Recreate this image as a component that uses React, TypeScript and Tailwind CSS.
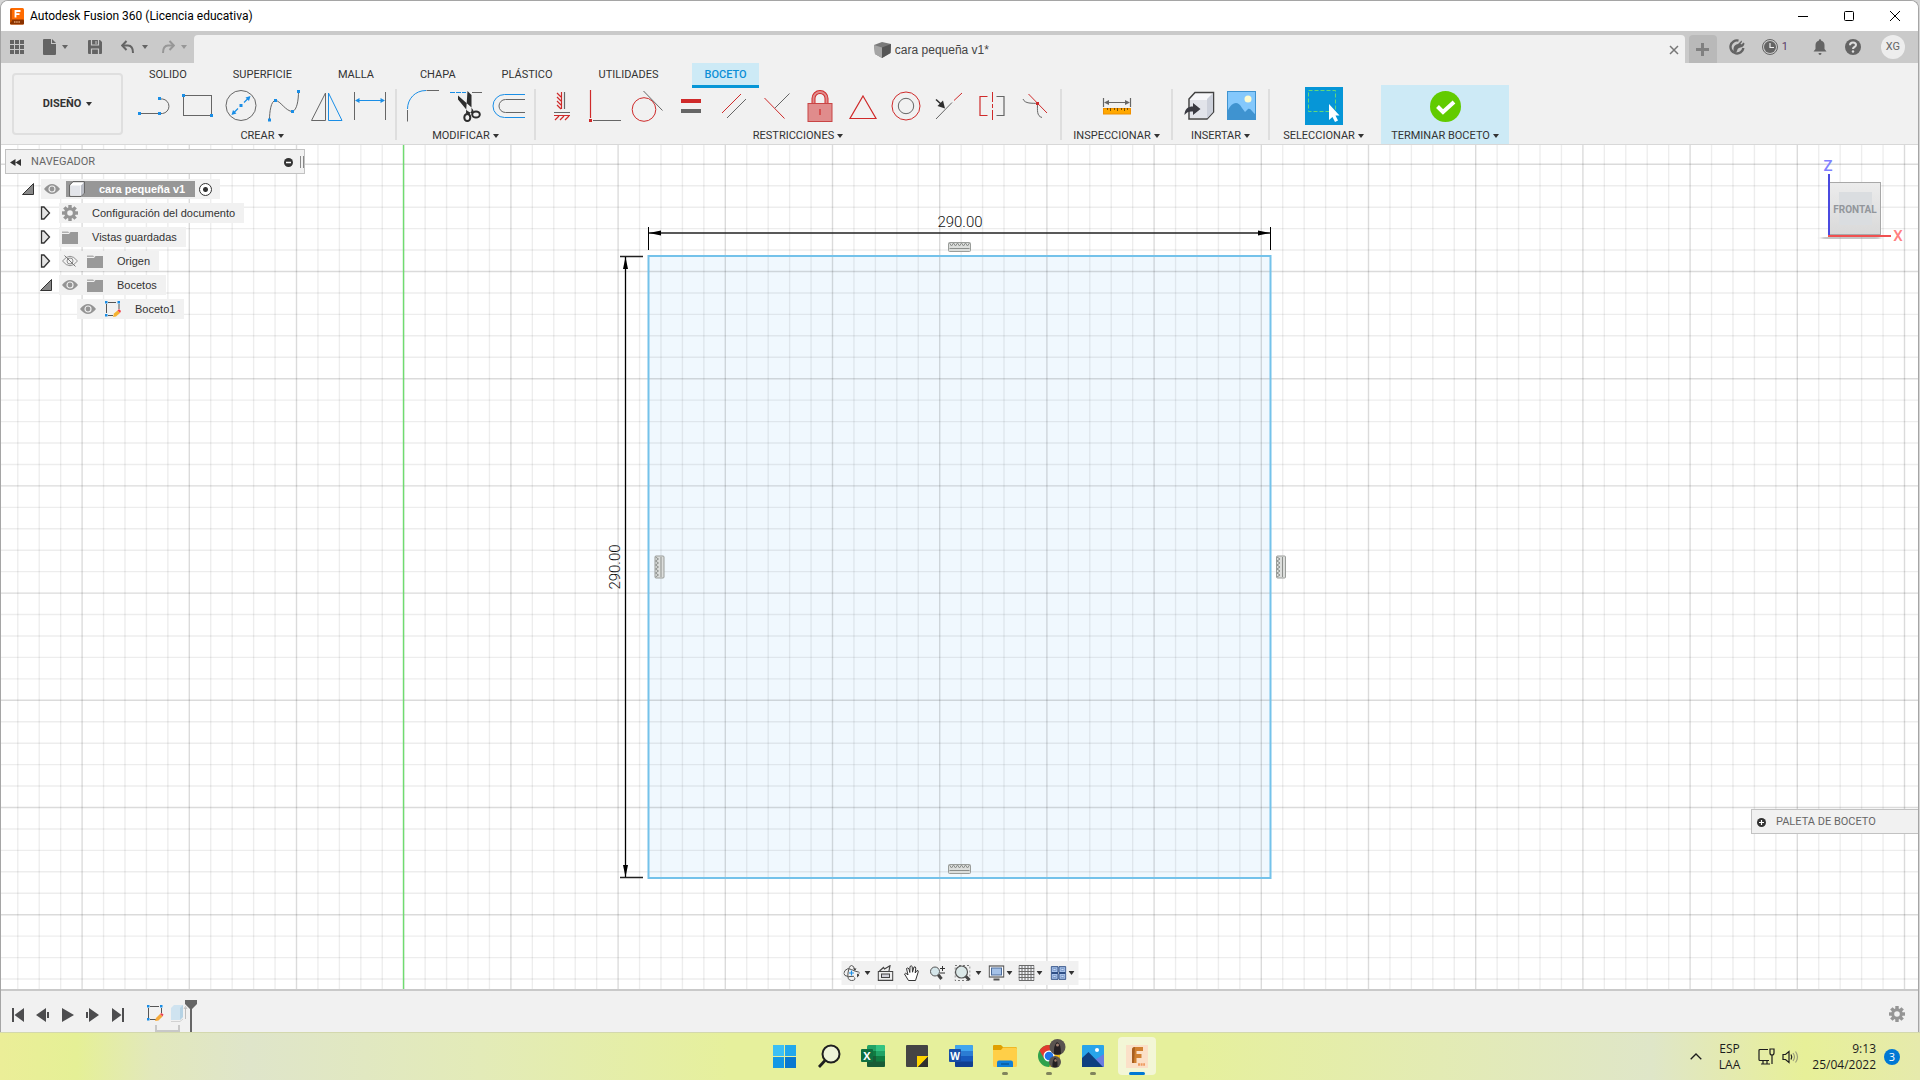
import type { ReactNode } from 'react'

const BLUE = '#1a8ee6'
const RED = '#cf2a2a'
const GREY = '#666666'

function Caret({ className = 'text-[#333]' }: { className?: string }) {
  return (
    <svg width="6" height="4" viewBox="0 0 6 4" className={className}>
      <path d="M0 0H6L3 4Z" fill="currentColor" />
    </svg>
  )
}

function ToolSvg({ children }: { children: ReactNode }) {
  return (
    <svg width="36" height="36" viewBox="0 0 36 36" fill="none" strokeWidth="1">
      {children}
    </svg>
  )
}

function Dot({ x, y, color = BLUE }: { x: number; y: number; color?: string }) {
  return <rect x={x - 1.5} y={y - 1.5} width="3" height="3" fill={color} />
}

interface Tool {
  name: string
  icon: ReactNode
}

const createTools: Tool[] = [
  {
    name: 'Línea',
    icon: (
      <>
        <path d="M4 25.5H21M24 25.5H25.5A7.3 7.3 0 0 0 25.5 11H24" stroke={GREY} />
        <Dot x={2.5} y={25.5} />
        <Dot x={22.5} y={25.5} />
        <Dot x={22.5} y={10.5} />
      </>
    ),
  },
  {
    name: 'Rectángulo',
    icon: (
      <>
        <rect x="3.5" y="7.5" width="28" height="20" stroke={GREY} />
        <Dot x={3.5} y={7.5} />
        <Dot x={31.5} y={27.5} />
      </>
    ),
  },
  {
    name: 'Círculo',
    icon: (
      <>
        <circle cx="18" cy="17.5" r="15" stroke={GREY} />
        <path d="M10 25.5L15 20.5M21 14.5L26 9.5" stroke={BLUE} strokeWidth="1.2" />
        <path d="M8.5 27L10 22L13.5 25.5ZM27.5 8L26 13L22.5 9.5Z" fill={BLUE} />
        <Dot x={18} y={17.5} />
      </>
    ),
  },
  {
    name: 'Spline',
    icon: (
      <>
        <path d="M3.5 32C3.5 24 5 12.5 9.5 12.5S20 23.5 26.5 23.5C31 22 32.5 12 32.5 3.5" stroke={GREY} />
        <Dot x={3.5} y={32} />
        <Dot x={9.5} y={12.5} />
        <Dot x={26.5} y={23.5} />
        <Dot x={32.5} y={3.5} />
      </>
    ),
  },
  {
    name: 'Simetría',
    icon: (
      <>
        <path d="M16.5 5V32.5H2.5Z" stroke={GREY} />
        <path d="M19.5 5V32.5H33Z" stroke={BLUE} />
      </>
    ),
  },
  {
    name: 'Cota de boceto',
    icon: (
      <>
        <path d="M2.5 4V32M33.5 4V32" stroke={GREY} />
        <path d="M5 12.5H31" stroke={BLUE} />
        <path d="M3 12.5L7.5 10V15ZM33 12.5L28.5 10V15Z" fill={BLUE} />
      </>
    ),
  },
]

const modifyTools: Tool[] = [
  {
    name: 'Empalme',
    icon: (
      <>
        <path d="M2.5 21C2.5 11 10 2.5 21 2.5" stroke={BLUE} />
        <path d="M21.5 2.5H34M2.5 22V33.5" stroke={GREY} />
      </>
    ),
  },
  {
    name: 'Recortar',
    icon: (
      <>
        <path d="M2 4.5H18" stroke={BLUE} strokeDasharray="5 1" />
        <path d="M24 4.5H34" stroke={GREY} />
        <path d="M10 7.5V11.5L19.5 23L24 25.5L25.5 22.5L23 19ZM19.5 3L23.5 7V23L21 27L18 25Z" fill="#2d2d2d" />
        <ellipse cx="19.3" cy="29.5" rx="3" ry="3.6" stroke="#2d2d2d" strokeWidth="2" />
        <ellipse cx="28" cy="26.5" rx="3.8" ry="3" stroke="#2d2d2d" strokeWidth="2" />
      </>
    ),
  },
  {
    name: 'Desfase',
    icon: (
      <>
        <path d="M34 6.5H13.5A11.5 11.5 0 0 0 13.5 29.5H34" stroke={BLUE} />
        <path d="M34 11.5H14.5A6.5 6.5 0 0 0 14.5 24.5H34" stroke={GREY} />
      </>
    ),
  },
]

const constraintTools: Tool[] = [
  {
    name: 'Horizontal/Vertical',
    icon: (
      <>
        <path d="M17.5 4V21M10 27.5H26M13 5L17 9M13 9L17 13M13 13L17 17M13 17L17 21M15 28L11 32M20 28L16 32M25 28L21 32" stroke={RED} strokeWidth="1.2" />
        <path d="M20.5 4V21M10 24.5H26" stroke={GREY} strokeWidth="1.2" />
      </>
    ),
  },
  {
    name: 'Coincidente',
    icon: (
      <>
        <path d="M3.5 2V30" stroke={RED} strokeWidth="1.2" />
        <path d="M6 32.5H34" stroke={GREY} />
        <Dot x={3.5} y={32.5} color={RED} />
      </>
    ),
  },
  {
    name: 'Tangente',
    icon: (
      <>
        <circle cx="14" cy="21.5" r="11.8" stroke={RED} />
        <path d="M13.5 3L32.5 22.5" stroke={GREY} />
      </>
    ),
  },
  {
    name: 'Igual',
    icon: (
      <>
        <rect x="8" y="11" width="20" height="4" fill={RED} />
        <rect x="8" y="21" width="20" height="4" fill={GREY} />
      </>
    ),
  },
  {
    name: 'Paralela',
    icon: (
      <>
        <path d="M6 25L25 6" stroke={RED} />
        <path d="M11 30L30 11" stroke={GREY} />
      </>
    ),
  },
  {
    name: 'Perpendicular',
    icon: (
      <>
        <path d="M5.5 10L25.5 30.5" stroke={RED} />
        <path d="M16 20L30.5 5.5" stroke={GREY} />
      </>
    ),
  },
  {
    name: 'Fijar',
    icon: (
      <>
        <path d="M11.5 15V10.5A6.5 6.5 0 0 1 24.5 10.5V15" stroke={RED} strokeWidth="4" />
        <path d="M11.5 15V10.5A6.5 6.5 0 0 1 24.5 10.5V15" stroke="#e08c8c" strokeWidth="2" />
        <rect x="6" y="15.5" width="24" height="18" fill="#e08c8c" stroke="#c84444" />
        <path d="M18 21V27" stroke={RED} strokeWidth="1.2" />
      </>
    ),
  },
  { name: 'Punto medio', icon: <path d="M18 8L31 30.5H5Z" stroke={RED} strokeWidth="1.2" /> },
  {
    name: 'Concéntrica',
    icon: (
      <>
        <circle cx="18" cy="18" r="14" stroke={RED} />
        <circle cx="18" cy="18" r="7.7" stroke={GREY} />
      </>
    ),
  },
  {
    name: 'Colineal',
    icon: (
      <>
        <path d="M5 31L21 14.5" stroke={GREY} />
        <path d="M23 12.5L31 5" stroke={RED} />
        <path d="M5 11.5L10 16" stroke="#2d2d2d" strokeWidth="1.5" />
        <path d="M14 20.5L6.5 18L12 12.5Z" fill="#2d2d2d" />
      </>
    ),
  },
  {
    name: 'Simétrica',
    icon: (
      <>
        <path d="M13.5 8.5H6V27.5H13.5" stroke={RED} strokeWidth="1.2" />
        <path d="M18.5 4V14M18.5 16V20M18.5 22V32" stroke={RED} />
        <path d="M22.5 8.5H30V27.5H22.5" stroke={GREY} strokeWidth="1.2" />
      </>
    ),
  },
  {
    name: 'Curvatura',
    icon: (
      <>
        <path d="M6 11C8 16 15 15 20.5 15.5C20.5 22 19.5 28 25 29.5" stroke={GREY} />
        <path d="M11.5 6L30 25" stroke={RED} />
        <Dot x={20.5} y={15.5} color={RED} />
      </>
    ),
  },
]

const inspectTools: Tool[] = [
  {
    name: 'Medir',
    icon: (
      <>
        <path d="M4.5 10V19M31.5 10V19M7 14.5H29" stroke={GREY} strokeWidth="1.2" />
        <path d="M5 14.5L10 12V17ZM31 14.5L26 12V17Z" fill={GREY} />
        <rect x="4.5" y="20.5" width="27" height="5.5" fill="#ffa800" stroke="#f09000" />
        <path d="M8.5 20V22M11.5 20V23M15.5 20V22M18.5 20V23M22.5 20V22M25.5 20V23M28.5 20V22" stroke="#7a5000" />
      </>
    ),
  },
]

const insertTools: Tool[] = [
  {
    name: 'Insertar derivado',
    icon: (
      <>
        <path d="M8 11L14 4.5H32.5V24L26 31H8Z" fill="#f8f8fa" stroke="#444" strokeWidth="1.5" />
        <path d="M26 11L32 5V24L26 30.5Z" fill="#cdd1db" />
        <path d="M9 12H26V30H9Z" fill="#e2e4ea" />
        <path d="M3.5 27C3.5 21 7 18.5 12 18.5V15L19.5 21L12 27V23.5C8 23 6 24 3.5 27Z" fill="#3a3a42" />
      </>
    ),
  },
  {
    name: 'Lienzo',
    icon: (
      <>
        <rect x="3.5" y="3.5" width="28" height="28" fill="#84c8fc" stroke="#3f93d0" />
        <circle cx="24" cy="11" r="3.5" fill="#fdfbd0" />
        <path d="M4 22C8 14 14 12 18 20L21 24L24 21C27 20 28 24 31 26V31H4Z" fill="#3f93d0" />
      </>
    ),
  },
]

function GroupLabel({ label }: { label: string }) {
  return (
    <button className="flex h-[17px] items-center justify-center gap-[3px] pt-px whitespace-nowrap">
      {label}
      <Caret />
    </button>
  )
}

function ToolGroup({ label, tools, width }: { label: string; tools: Tool[]; width?: string }) {
  return (
    <div className="flex">
      <div className={`flex flex-col px-1 ${width ?? ''}`}>
        <div className="flex h-[42px] items-center justify-center">
          {tools.map((tool) => (
            <button key={tool.name} title={tool.name} aria-label={tool.name} className="flex w-[43px] shrink-0 justify-center">
              <ToolSvg>{tool.icon}</ToolSvg>
            </button>
          ))}
        </div>
        <GroupLabel label={label} />
      </div>
      <div className="my-1 w-[2px] bg-[#dedede]" />
    </div>
  )
}

function FusionLogo() {
  return (
    <svg width="14" height="17" viewBox="0 0 14 17">
      <rect width="14" height="16.5" rx="1.5" fill="#ff6b00" />
      <rect y="11.5" width="14" height="5" rx="1" fill="#8a3300" />
      <path d="M0 1.5V15L2 13V1Z" fill="#c95200" />
      <path d="M5.5 9.5V3H10.5M5.5 6.2H9.5" stroke="#fff" strokeWidth="1.8" fill="none" />
      <path d="M4 14H10" stroke="#e0a070" strokeWidth="1.5" strokeDasharray="1.5 .7" />
    </svg>
  )
}

function TitleBar() {
  return (
    <header className="flex h-[30px] items-center bg-white pl-[9px]">
      <FusionLogo />
      <h1 className="flex-1 pl-[6px] font-['Roboto',sans-serif] text-[12px] text-black">Autodesk Fusion 360 (Licencia educativa)</h1>
      <button aria-label="Minimizar" className="flex h-full w-[46px] items-center justify-center">
        <svg width="10" height="10"><path d="M0 5.5H10" stroke="#000" /></svg>
      </button>
      <button aria-label="Maximizar" className="flex h-full w-[46px] items-center justify-center">
        <svg width="10" height="10"><rect x=".5" y=".5" width="9" height="9" rx="1" fill="none" stroke="#000" /></svg>
      </button>
      <button aria-label="Cerrar" className="flex h-full w-[46px] items-center justify-center">
        <svg width="10" height="10"><path d="M0 0L10 10M10 0L0 10" stroke="#000" /></svg>
      </button>
    </header>
  )
}

function UndoArrow() {
  return (
    <svg width="14" height="14" viewBox="0 0 14 14" fill="none" stroke="currentColor" strokeWidth="2">
      <path d="M1.5 5.5H7C11 5.5 12 9 12 13" />
      <path d="M5.5 1L1.2 5.5L5.5 10" />
    </svg>
  )
}

function TabBar() {
  return (
    <div className="flex h-8 items-end bg-[#cacaca] text-[#646464]">
      <div className="flex h-full w-[193px] items-center pl-[9px]">
        <button aria-label="Panel de datos">
          <svg width="14" height="14" fill="currentColor">
            {[0, 5, 10].map((y) => [0, 5, 10].map((x) => <rect key={`${x}-${y}`} x={x} y={y} width="4" height="4" />))}
          </svg>
        </button>
        <button aria-label="Archivo" className="ml-[19px] flex items-center gap-[6px]">
          <svg width="13" height="16" fill="currentColor"><path d="M1 0H8V5H13V15Q13 16 12 16H1Q0 16 0 15V1Q0 0 1 0ZM9 0L13 4H9Z" /></svg>
          <Caret className="text-[#646464]" />
        </button>
        <button aria-label="Guardar" className="ml-5">
          <svg width="14" height="14" viewBox="0 0 14 14">
            <path d="M1 0H12L14 2V13Q14 14 13 14H1Q0 14 0 13V1Q0 0 1 0Z" fill="currentColor" />
            <path d="M3.5 0V5H10.5V0M3.5 14V9H10.5V14" fill="none" stroke="#cacaca" strokeWidth="1.2" />
            <path d="M8 1V4" stroke="#cacaca" />
          </svg>
        </button>
        <button aria-label="Deshacer" className="ml-[19px] flex items-center gap-[7px]">
          <UndoArrow />
          <Caret className="text-[#646464]" />
        </button>
        <button aria-label="Rehacer" className="ml-[13px] flex items-center gap-[6px] text-[#979797]">
          <span className="-scale-x-100"><UndoArrow /></span>
          <Caret className="text-[#979797]" />
        </button>
      </div>

      <div className="flex h-7 flex-1 items-center rounded-t-[4px] bg-[#f1f1f1] pt-px pr-[6px]">
        <div className="flex flex-1 items-center justify-center gap-1 font-['Liberation_Sans',sans-serif] text-[12px] text-[#444]">
          <svg width="17" height="16" viewBox="0 0 17 16">
            <path d="M0 3L8 0L17 2L16.5 11L8 16L1 12Z" fill="#7a7a7a" />
            <path d="M0 3L8 5.5V16L1 12Z" fill="#a5a5a5" />
            <path d="M8 5.5L17 2L16.5 11L8 16Z" fill="#555" />
          </svg>
          <span>cara pequeña v1*</span>
        </div>
        <button aria-label="Cerrar documento">
          <svg width="10" height="10"><path d="M1 1L9 9M9 1L1 9" stroke="#777" strokeWidth="1.5" /></svg>
        </button>
      </div>

      <div className="flex h-full items-end pl-1">
        <button aria-label="Nuevo diseño" className="flex h-7 w-7 items-center justify-center rounded-t-[4px] bg-[#b9b9b9]">
          <svg width="13" height="13"><path d="M6.5 0V13M0 6.500H13" stroke="#808080" strokeWidth="3" /></svg>
        </button>
        <div className="flex h-full items-center pl-3">
          <button aria-label="Extensiones">
            <svg width="16" height="16" viewBox="0 0 16 16">
              <path d="M9.5 1.600A6.500 6.500 0 1 0 14.400 9" fill="none" stroke="currentColor" strokeWidth="2.400" />
              <path d="M4.500 14V9.500Q5 5.500 9 5L12.500 1.500L13 3L11.500 4.500L12.500 5.500L14.500 3.500L15.500 4.500Q15 8 11.500 8.500Q8 9 8 12.500Z" fill="currentColor" />
            </svg>
          </button>
          <button aria-label="Estado de trabajos" className="ml-[17px] flex items-center gap-1 text-[11px]">
            <svg width="16" height="16" viewBox="0 0 16 16">
              <circle cx="8" cy="8" r="7.5" fill="none" stroke="currentColor" />
              <circle cx="8" cy="8" r="6" fill="currentColor" />
              <path d="M8 4V8.5H12" fill="none" stroke="#eee" strokeWidth="1.2" />
            </svg>
            <span className="font-['Roboto',sans-serif] text-[#5b3a68]">1</span>
          </button>
          <button aria-label="Notificaciones" className="ml-[25px]">
            <svg width="14" height="16" viewBox="0 0 14 16" fill="currentColor">
              <path d="M7 0Q8 0 8 1.5Q11.5 2.5 11.5 6V10L13.5 12.5H.5L2.5 10V6Q2.5 2.5 6 1.5Q6 0 7 0ZM5.5 14H8.5Q8.5 16 7 16T5.5 14Z" />
            </svg>
          </button>
          <button aria-label="Ayuda" className="ml-[18px]">
            <svg width="16" height="16" viewBox="0 0 16 16">
              <circle cx="8" cy="8" r="8" fill="currentColor" />
              <path d="M5 6.2Q5 3.5 8 3.5T11 6Q11 7.2 9.5 8Q8 8.8 8 10" fill="none" stroke="#ddd" strokeWidth="2" />
              <circle cx="8" cy="12.5" r="1.2" fill="#ddd" />
            </svg>
          </button>
          <button className="mr-[13px] ml-5 h-6 w-6 rounded-full bg-[#ededed] font-['Roboto',sans-serif] text-[11px] text-[#666]">XG</button>
        </div>
      </div>
    </div>
  )
}

const ribbonTabs = ['SOLIDO', 'SUPERFICIE', 'MALLA', 'CHAPA', 'PLÁSTICO', 'UTILIDADES', 'BOCETO']

function Ribbon() {
  return (
    <div className="flex border-b border-[#d8d8d8] bg-[#f1f1f1] pl-[11px] font-['Roboto',sans-serif] text-[11px] text-[#333]">
      <button className="mt-[10px] flex h-[62px] w-[111px] items-center justify-center gap-[5px] rounded-[4px] border-2 border-[#dfdfdf] font-bold">
        DISEÑO
        <Caret />
      </button>
      <div className="flex-1 pl-[6px]">
        {/* the active tab hangs slightly over the tool row */}
        <nav className="flex h-[22px] gap-[22px] pl-2">
          {ribbonTabs.map((tab) => (
            <button
              key={tab}
              className={`h-[25px] border-b-[3px] px-3 pt-[2px] ${
                tab === 'BOCETO' ? 'border-[#0696d7] bg-[#cdeaf6] font-medium text-[#0c8fd6]' : 'border-transparent'
              }`}
            >
              {tab}
            </button>
          ))}
        </nav>
        <div className="flex h-[59px]">
          <ToolGroup label="CREAR" tools={createTools} />
          <ToolGroup label="MODIFICAR" tools={modifyTools} />
          <ToolGroup label="RESTRICCIONES" tools={constraintTools} />
          <ToolGroup label="INSPECCIONAR" tools={inspectTools} width="w-[109px]" />
          <ToolGroup label="INSERTAR" tools={insertTools} width="w-[95px]" />
          <div className="flex w-[107px] flex-col">
            <button aria-label="Seleccionar" className="flex h-[42px] items-center justify-center">
              <svg width="38" height="38" viewBox="0 0 38 38">
                <rect width="38" height="38" fill="#0696d7" />
                <rect x="3.5" y="3.5" width="27" height="21" fill="none" stroke="#62d87a" strokeDasharray="4 2" />
                <path d="M24 17V33L27.5 30L30 35L33 33.5L30.5 28.5H34.5Z" fill="#fff" />
              </svg>
            </button>
            <GroupLabel label="SELECCIONAR" />
          </div>
          <div className="ml-1 flex w-[128px] flex-col bg-[#cdeaf6]">
            <button aria-label="Terminar boceto" className="flex h-[42px] items-center justify-center">
              <svg width="31" height="31" viewBox="0 0 31 31">
                <circle cx="15.5" cy="15.5" r="15.5" fill="#62cb00" />
                <path d="M7.5 15.5L13 21L24 11" fill="none" stroke="#fff" strokeWidth="4" />
              </svg>
            </button>
            <GroupLabel label="TERMINAR BOCETO" />
          </div>
        </div>
      </div>
    </div>
  )
}

function EyeIcon({ off }: { off?: boolean }) {
  return (
    <svg width="16" height="12" viewBox="0 0 16 12" fill="none">
      {off ? (
        <>
          <path d="M.5 6Q8-3.5 15.5 6Q8 15.5 .5 6Z" stroke="#8f8f8f" />
          <circle cx="8" cy="6" r="3" stroke="#8f8f8f" />
          <path d="M2.5 .5L13.5 11.5" stroke="#777" />
        </>
      ) : (
        <>
          <path d="M0 6Q8-4 16 6Q8 16 0 6Z" fill="#949494" />
          <circle cx="8" cy="6" r="3" fill="#949494" stroke="#eee" strokeWidth="1.2" />
        </>
      )}
    </svg>
  )
}

function GearIcon() {
  return (
    <svg width="16" height="16" viewBox="0 0 16 16">
      <circle cx="8" cy="8" r="4.3" fill="none" stroke="#959595" strokeWidth="3" />
      {[0, 45, 90, 135, 180, 225, 270, 315].map((a) => (
        <rect key={a} x="6.3" y="0" width="3.4" height="3.5" fill="#959595" transform={`rotate(${a} 8 8)`} />
      ))}
    </svg>
  )
}

function FolderIcon() {
  return (
    <svg width="16" height="13" viewBox="0 0 16 13">
      <path d="M0 .5H6L7.5 2H0Z" fill="#b0b0b0" />
      <path d="M0 3H7L8.5 1H16V13H0Z" fill="#999" />
    </svg>
  )
}

function SketchIcon() {
  return (
    <svg width="16" height="16" viewBox="0 0 16 16">
      <path d="M3 1.5H11M1.5 3V12M14 3V8M3 14.5H8" stroke="#555" />
      <path d="M0 0H2.5V2.5H0ZM12.5 0H15V2.5H12.5ZM0 13H2.5V15.5H0Z" fill={BLUE} />
      <path d="M8 16L9 12.5L12.5 9.5L15 12L11 15.5Z" fill="#f5b230" />
      <path d="M12.5 9.5L14 8L16 10L15 12Z" fill="#f0404a" />
    </svg>
  )
}

function BodyIcon() {
  return (
    <svg width="16" height="16" viewBox="0 0 16 16">
      <path d="M.7 4L4 .7H15.3V12L12 15.3H.7Z" fill="#fff" stroke="#555" />
      <path d="M12 4.5L15 1.5V12L12 15Z" fill="#b9bcc4" />
      <path d="M1.5 4.5H11.5V14.5H1.5Z" fill="#e3e5ea" />
    </svg>
  )
}

interface TreeNode {
  label: string
  indent: string
  state: 'open' | 'closed' | 'leaf'
  icons: ReactNode[]
}

const treeNodes: TreeNode[] = [
  { label: 'Configuración del documento', indent: 'pl-[38px]', state: 'closed', icons: [<GearIcon />] },
  { label: 'Vistas guardadas', indent: 'pl-[38px]', state: 'closed', icons: [<FolderIcon />] },
  { label: 'Origen', indent: 'pl-[38px]', state: 'closed', icons: [<EyeIcon off />, <FolderIcon />] },
  { label: 'Bocetos', indent: 'pl-[38px]', state: 'open', icons: [<EyeIcon />, <FolderIcon />] },
  { label: 'Boceto1', indent: 'pl-[56px]', state: 'leaf', icons: [<EyeIcon />, <SketchIcon />] },
]

function Expander({ state }: { state: TreeNode['state'] }) {
  return (
    <span className="flex w-5 shrink-0 items-center pl-px">
      {state === 'open' && (
        <svg width="12" height="12"><path d="M11.5 .5V11.5H.5Z" fill="#888" stroke="#333" /></svg>
      )}
      {state === 'closed' && (
        <svg width="11" height="14" viewBox="0 0 11 14"><path d="M1.500 1H4L9.500 7L4 13H1.500Z" fill="#e4e4e4" stroke="#333" strokeWidth="1.3" /></svg>
      )}
    </span>
  )
}

function Browser() {
  return (
    <section className="relative pt-1 pl-1">
      <div className="flex h-[25px] w-[300px] items-center border border-[#c2c2c2] bg-[#f1f1f1] pt-px pl-[4px] font-['Roboto',sans-serif] text-[11px] text-[#666]">
        <button aria-label="Contraer navegador">
          <svg width="11" height="7"><path d="M5.5 0V7L0 3.5ZM11 0V7L5.5 3.5Z" fill="#333" /></svg>
        </button>
        <h2 className="flex-1 pl-[10px]">NAVEGADOR</h2>
        <button aria-label="Minimizar navegador">
          <svg width="9" height="9"><circle cx="4.5" cy="4.5" r="4.5" fill="#333" /><path d="M2 4.5H7" stroke="#fff" strokeWidth="1.5" /></svg>
        </button>
        <svg width="4" height="12" className="ml-[7px]"><path d="M.5 0V12M3.5 0V12" stroke="#888" /></svg>
      </div>

      <ul className="-ml-1 flex flex-col gap-1 pt-[5px] font-['Liberation_Sans',sans-serif] text-[11px] text-[#333]">
        <li className="flex h-5 pl-5">
          <Expander state="open" />
          <div className="flex items-center bg-[#f1f1f1] pr-2 pl-[3px]">
            <EyeIcon />
            <div className="mr-1 ml-[6px] flex h-4 items-center gap-[14px] bg-[#979797] pr-[10px] pl-[3px] font-bold text-white">
              <BodyIcon />
              <span>cara pequeña v1</span>
            </div>
            <input type="radio" defaultChecked aria-label="Activar cara pequeña v1" className="h-[13px] w-[13px] appearance-none rounded-full border border-[#333] bg-white bg-[radial-gradient(#333_0_2px,transparent_3px)]" />
          </div>
        </li>
        {treeNodes.map((node) => (
          <li key={node.label} className={`flex h-5 ${node.indent}`}>
            <Expander state={node.state} />
            <div className="flex items-center bg-[#f1f1f1] pr-[9px] pl-[3px]">
              <span className="flex items-center gap-[9px] pr-[14px]">
                {node.icons.map((icon, i) => (
                  <span key={i}>{icon}</span>
                ))}
              </span>
              {node.label}
            </div>
          </li>
        ))}
      </ul>
    </section>
  )
}

// Grid origin (green axis) and pitch of one minor cell
const GRID_X = 402.7
const GRID_Y = 19.3
const CELL = 21.44
const columns = Array.from({ length: 180 }, (_, i) => i - 60)
const rows = Array.from({ length: 120 }, (_, i) => i - 20)

function ConstraintGlyph({ x, y, vertical }: { x: number; y: number; vertical?: boolean }) {
  return (
    <g transform={`translate(${x} ${y})${vertical ? ' rotate(-90)' : ''}`}>
      <rect x="-11" y="-4.5" width="22" height="9" rx="1" fill="#dcdedc" stroke="#9a9d9a" />
      <path d="M-10-4L-8-1L-6-4L-4-1L-2-4L0-1L2-4L4-1L6-4L8-1L10-4" fill="none" stroke="#8b8e8b" />
      <path d="M-10 1.5H10" stroke="#8b8e8b" />
    </g>
  )
}

function SketchCanvas() {
  return (
    <svg className="absolute inset-0 h-full w-full" fontFamily="Roboto, sans-serif">
      <rect x="647.5" y="111" width="622" height="622" fill="#f0f8fe" />
      {columns.map((c) => (
        <line key={c} x1={GRID_X + c * CELL} x2={GRID_X + c * CELL} y1="0" y2="100%" stroke="#000" strokeWidth="1.4" strokeOpacity={c % 5 === 0 ? 0.14 : 0.07} />
      ))}
      {rows.map((r) => (
        <line key={r} x1="0" x2="100%" y1={GRID_Y + r * CELL} y2={GRID_Y + r * CELL} stroke="#000" strokeWidth="1.4" strokeOpacity={r % 5 === 0 ? 0.14 : 0.07} />
      ))}
      <path d="M402.5 0V2000" stroke="#6fdc6f" strokeWidth="1.4" />
      <rect x="647.5" y="111" width="622" height="622" fill="none" stroke="#74c2ea" strokeWidth="2" />

      {/* horizontal dimension */}
      <path d="M647.5 82V105M1269.5 82V105" stroke="#000" />
      <path d="M648 88H1269" stroke="#222" strokeWidth="1.5" />
      <path d="M648 88L660 85.5V90.5ZM1269 88L1257 85.5V90.5Z" fill="#000" />
      <text x="959" y="82" textAnchor="middle" fontSize="15" fontWeight="300" fill="#111">290.00</text>

      {/* vertical dimension */}
      <path d="M619 111.5H642M619 732.5H642" stroke="#222" strokeWidth="1.4" />
      <path d="M624.5 112V732" stroke="#000" strokeWidth="1.3" />
      <path d="M624.5 112L622 124H627ZM624.5 732L622 720H627Z" fill="#000" />
      <text transform="translate(619 422) rotate(-90)" textAnchor="middle" fontSize="15" fontWeight="300" fill="#111">290.00</text>

      <ConstraintGlyph x={958.5} y={102} />
      <ConstraintGlyph x={958.5} y={724} />
      <ConstraintGlyph x={658.5} y={422} vertical />
      <ConstraintGlyph x={1280} y={422} vertical />
    </svg>
  )
}

function ViewCube() {
  return (
    <svg width="110" height="100" viewBox="0 0 110 100" className="absolute top-[10px] right-0" fontFamily="Roboto, sans-serif">
      <defs>
        <linearGradient id="face" x1="0" y1="0" x2="0" y2="1">
          <stop offset="0" stopColor="#ececec" />
          <stop offset="1" stopColor="#d9d9d9" />
        </linearGradient>
        <filter id="soft"><feGaussianBlur stdDeviation="2" /></filter>
      </defs>
      <path d="M14 83L72 83.1" stroke="#888" strokeWidth="3" filter="url(#soft)" />
      <rect x="21.5" y="27.5" width="51" height="52" fill="url(#face)" stroke="#a8a8a8" />
      <rect x="31" y="37" width="33" height="33" fill="#dadde0" />
      <text x="47" y="58" textAnchor="middle" fontSize="10" fontWeight="700" fill="#92969b">FRONTAL</text>
      <path d="M21 19V81" stroke="#4a4ae0" strokeWidth="2" />
      <path d="M20 81H83" stroke="#f05050" strokeWidth="2" />
      <text x="20" y="16" textAnchor="middle" fontSize="15" fontWeight="500" fill="#8080ff">Z</text>
      <text x="90" y="86" textAnchor="middle" fontSize="15" fontWeight="500" fill="#ff8080">X</text>
    </svg>
  )
}

const navTools = [
  {
    name: 'Órbita',
    menu: true,
    cell: 'w-[31px] gap-[5px]',
    icon: (
      <>
        <path d="M10.5 11.3Q4 12.300 1.500 10.500T1.500 5.500T8 4.500T15 7T13.500 10.700" stroke="#555" />
        <path d="M11.300 5Q10.500 .5 8 .5T4.500 8T8 15.500T11 12.500" stroke="#555" />
        <path d="M13.500 8.500V12.500L16 10.300ZM9.500 3.500H13L11.500 6Z" fill="#444" />
        <path d="M5.500 8H10.500M8 5.500V10.500" stroke={BLUE} strokeWidth="1.2" />
      </>
    ),
  },
  {
    name: 'Mirar a',
    cell: 'w-[26px]',
    icon: (
      <>
        <path d="M.7 6.5H15.300V15.300H.7ZM2 6L6 2.500L7 4L12.500 .7L11.500 6" stroke="#444" fill="#eee" strokeWidth="1.2" />
        <rect x="4" y="9" width="8" height="3.5" stroke="#444" fill="#d0d0d8" />
      </>
    ),
  },
  {
    name: 'Encuadre',
    cell: 'w-[26px]',
    icon: (
      <path d="M5 15.500L1 9Q1.500 7.500 3.500 9L4.500 10L3 3.500Q4.500 2 5.500 4L6.300 7.500L6.500 1.500Q8 .2 8.700 1.500L9 7.200L10.500 2Q12 1.300 12.300 3L11.700 8L13.500 5.500Q15.200 5.300 14.700 7L12 15.500Z" stroke="#333" fill="#fff" />
    ),
  },
  {
    name: 'Zoom',
    cell: 'w-[26px]',
    icon: (
      <>
        <path d="M8.5 9.5L12 14" stroke="#444" strokeWidth="3" />
        <circle cx="5.5" cy="6.5" r="4.5" stroke="#555" fill="#d5e6ea" />
        <path d="M13 1V6M10.5 3.5H15.5M10.5 8H15.5" stroke="#333" />
      </>
    ),
  },
  {
    name: 'Ajustar',
    menu: true,
    cell: 'w-[36px] gap-[5px]',
    icon: (
      <>
        <rect x=".5" y=".5" width="15" height="15" stroke="#777" strokeDasharray="2 2" />
        <path d="M10.5 10.5L15 15" stroke="#444" strokeWidth="3" />
        <circle cx="7" cy="7" r="6" stroke="#555" fill="#dbe8e8" strokeWidth="1.2" />
      </>
    ),
  },
  {
    name: 'Configuración de visualización',
    menu: true,
    cell: 'w-[29px] gap-[2px]',
    icon: (
      <>
        <rect x=".7" y="1" width="14.6" height="11" stroke="#555" fill="#fff" strokeWidth="1.2" />
        <rect x="3" y="3" width="10" height="7" fill="#a5c2e8" stroke="#4a6a9a" />
        <path d="M5 14.5H11" stroke="#555" strokeWidth="2" />
      </>
    ),
  },
  {
    name: 'Rejilla y captura',
    menu: true,
    cell: 'w-[31px] gap-[2px]',
    icon: <path d="M.5 .5H15.5V15.5H.5ZM3.5 0V16M6.5 0V16M9.5 0V16M12.5 0V16M0 3.5H16M0 6.5H16M0 9.5H16M0 12.5H16" stroke="#6a6a6a" fill="#f0f2f6" />,
  },
  {
    name: 'Ventanas gráficas',
    menu: true,
    cell: 'w-[32px] gap-[2px]',
    icon: (
      <>
        <path d="M.7 1.7H7.500V7.500H.7ZM8.500 1.700H15.300V7.500H8.500ZM.7 8.500H7.500V14.300H.7ZM8.500 8.500H15.300V14.300H8.500Z" stroke="#2f4f86" fill="#a9c3ea" />
        <path d="M2.500 3.500H5.500V5.500H2.500ZM10.500 3.500H13.500V5.500H10.500ZM2.500 10.500H5.500V12.500H2.500ZM10.500 10.500H13.500V12.500H10.500Z" stroke="#6d8cc0" strokeWidth=".7" fill="#c4d6f2" />
      </>
    ),
  },
]

function NavigationBar() {
  return (
    <div className="absolute bottom-1 left-1/2 flex h-6 -translate-x-1/2 bg-[#f1f1f1]">
      {navTools.map((tool) => (
        <button key={tool.name} aria-label={tool.name} title={tool.name} className={`flex shrink-0 items-center justify-center ${tool.cell}`}>
          <svg width="16" height="16" viewBox="0 0 16 16" fill="none" className="shrink-0">{tool.icon}</svg>
          {tool.menu && <Caret />}
        </button>
      ))}
    </div>
  )
}

const playback = [
  { name: 'Inicio', d: 'M1 0H3V14H1ZM13 0V14L3.5 7Z' },
  { name: 'Anterior', d: 'M10 0V14L0 7ZM11 4H13V10H11Z' },
  { name: 'Reproducir', d: 'M1 0L13 7L1 14Z' },
  { name: 'Siguiente', d: 'M0 4H2V10H0ZM3 0L13 7L3 14Z' },
  { name: 'Fin', d: 'M1 0L10.5 7L1 14ZM11 0H13V14H11Z' },
]

function Timeline() {
  return (
    <footer className="flex h-[43px] border-t-2 border-[#c9c9c9] bg-[#f1f1f1] pr-[13px] pl-[10px]">
      <div className="flex items-center gap-3 pt-[7px]">
        {playback.map((p) => (
          <button key={p.name} aria-label={p.name}>
            <svg width="13" height="14" fill="#4d4d4f"><path d={p.d} /></svg>
          </button>
        ))}
      </div>
      <div className="flex-1 pl-[22px]">
        <svg width="54" height="41" viewBox="0 0 54 41">
          <g transform="translate(1 14)">
            <path d="M3 1.5H12M1.5 3V13M14.5 3V8M3 14.5H9" stroke="#555" />
            <path d="M0 0H2.5V2.5H0ZM13 0H15.5V2.5H13ZM0 13H2.5V15.5H0Z" fill={BLUE} />
            <path d="M8 16L9 13L13 9L15.5 11.5L11.5 15.5Z" fill="#f5a93a" />
            <path d="M13 9L14.5 8L16.5 9.5L15.5 11.5Z" fill="#e84455" />
          </g>
          <path d="M25 17L28 14H37V26L34 29H25Z" fill="#cfe3f0" />
          <path d="M34 17L37 14V26L34 29Z" fill="#b5d2e4" />
          <path d="M25 30.5H34L37 28" stroke="#d2d2d2" fill="none" />
          <path d="M39.5 28V17M38 18L39.5 15.5L41 18" stroke="#bdbdbd" fill="none" />
          <path d="M10 34V40H33V34" stroke="#c8c8c8" strokeWidth="2" fill="none" />
          <path d="M39 9H51V13L46 18V41H44V18L39 13Z" fill="#666" />
        </svg>
      </div>
      <button aria-label="Preferencias de la línea de tiempo" className="pt-[5px]"><GearIcon /></button>
    </footer>
  )
}

const taskApps = [
  {
    name: 'Inicio',
    icon: (
      <>
        <path d="M2 2H13V13H2Z" fill="#3cc0f5" />
        <path d="M14 2H25V13H14Z" fill="#22a8ec" />
        <path d="M2 14H13V25H2Z" fill="#1398e4" />
        <path d="M14 14H25V25H14Z" fill="#0878d0" />
      </>
    ),
  },
  {
    name: 'Buscar',
    icon: (
      <>
        <circle cx="16" cy="11" r="8.5" fill="#eef3d8" stroke="#1f1f1f" strokeWidth="2" />
        <path d="M10 17.5L4 24" stroke="#1f1f1f" strokeWidth="2.8" />
      </>
    ),
  },
  {
    name: 'Excel',
    icon: (
      <>
        <rect x="8" y="2" width="18" height="22" rx="1.5" fill="#21a366" />
        <path d="M17 2H24.5Q26 2 26 3.5V8H17Z" fill="#33c481" />
        <path d="M8 8H17V13H8Z" fill="#107c41" />
        <path d="M8 13H26V22.5Q26 24 24.5 24H9.5Q8 24 8 22.5Z" fill="#185c37" />
        <path d="M17 13H26V18.5H17Z" fill="#107c41" />
        <rect x="2" y="6" width="12" height="13" rx="1" fill="#0f7040" />
        <text x="8" y="16.5" textAnchor="middle" fontSize="11" fontWeight="700" fill="#fff">X</text>
      </>
    ),
  },
  {
    name: 'Notas rápidas',
    icon: (
      <>
        <rect x="3" y="2" width="22" height="22" rx="1" fill="#444" />
        <path d="M14 13H25V14L15 24H14Z" fill="#ffd400" />
        <path d="M25 13.5V24H15Z" fill="#303030" />
      </>
    ),
  },
  {
    name: 'Word',
    icon: (
      <>
        <rect x="8" y="2" width="18" height="22" rx="1.5" fill="#185abd" />
        <path d="M8 8V3.5Q8 2 9.5 2H24.5Q26 2 26 3.5V8Z" fill="#41a5ee" />
        <path d="M8 8H26V13H8Z" fill="#2b7cd3" />
        <path d="M8 18.5H26V22.5Q26 24 24.5 24H9.5Q8 24 8 22.5Z" fill="#103f91" />
        <rect x="2" y="6" width="12" height="13" rx="1" fill="#174ea6" />
        <text x="8" y="16.5" textAnchor="middle" fontSize="10" fontWeight="700" fill="#fff">W</text>
      </>
    ),
  },
  {
    name: 'Explorador de archivos',
    running: true,
    icon: (
      <>
        <path d="M2 3Q2 2 3 2H10L12 4H24.5Q26 4 26 5.5V12H2Z" fill="#e0a000" />
        <path d="M2 7H10L12 4.5H24.5Q26 4.5 26 6V22.5Q26 24 24.5 24H3.5Q2 24 2 22.5Z" fill="#ffcf48" />
        <path d="M6 24V19.5Q6 17.5 8 17.5H20Q22 17.5 22 19.5V24Z" fill="#0f7fd8" />
        <path d="M10 21H18" stroke="#0a5a9c" strokeWidth="1.5" />
      </>
    ),
  },
  {
    name: 'Chrome',
    running: true,
    icon: (
      <>
        <circle cx="14" cy="13" r="11" fill="#2fa24c" />
        <path d="M4.5 7.5A11 11 0 0 1 23.5 7.5H14L9.2 15.7Z" fill="#e23b2e" />
        <path d="M23.5 7.5A11 11 0 0 1 14 24L18.7 15.7L14 7.5Z" fill="#fbc116" />
        <circle cx="14" cy="13" r="5.5" fill="#fff" />
        <circle cx="14" cy="13" r="4.3" fill="#1f74e8" />
        <circle cx="22.5" cy="4" r="8" fill="#5a5450" />
        <path d="M19 11Q18.5 2 22 -1Q26 0 26 11Q22 12 19 11Z" fill="#241f22" />
        <circle cx="22.5" cy="2" r="1.5" fill="#a08070" />
        <circle cx="20" cy="19" r="6" fill="#5a5450" />
        <path d="M17.5 24Q17 17 20 14.500Q23 16 22.500 24Z" fill="#241f22" />
        <circle cx="20.5" cy="17.5" r="1.2" fill="#a08070" />
      </>
    ),
  },
  {
    name: 'Fotos',
    running: true,
    icon: (
      <>
        <rect x="3" y="2" width="22" height="22" rx="1" fill="#28a4ea" />
        <path d="M25 11L14 18L20 24H25Z" fill="#6a7de0" />
        <path d="M3 15L9.5 9L24 24H3Z" fill="#0f3f80" />
        <circle cx="18" cy="7" r="2" fill="#fff" />
      </>
    ),
  },
  {
    name: 'Fusion 360',
    active: true,
    icon: (
      <>
        <rect x="3" y="2" width="22" height="23" fill="#fbe0c8" />
        <path d="M9 20V7Q9 4 12 4H20V8H13.5V11H18.5V15H13.5V20Z" fill="#d08030" />
        <path d="M9 20V7Q9 4 12 4L11 20Z" fill="#a85f20" />
        <path d="M15 21.5H22" stroke="#ee9a60" strokeWidth="2.5" strokeDasharray="2 .6" />
      </>
    ),
  },
]

function Taskbar() {
  return (
    <div className="grid h-12 grid-cols-[1fr_auto_1fr] items-center bg-[linear-gradient(90deg,#ebee98_0%,#e5f096_4%,#e2e8bc_8%,#dfe5ca_13%,#e3ebb8_25%,#e6f09c_38%,#e6f09c_62%,#e3ebb4_75%,#dfe6c8_86%,#e4eab0_90%,#e7f098_94%,#e6eaac_100%)] font-['Open_Sans',sans-serif] text-[12px] leading-4 text-[#1c1c1c] shadow-[inset_0_1px_0_#d3d8ae]">
      <div />
      <div className="flex pl-[2px]">
        {taskApps.map((app) => (
          <button key={app.name} aria-label={app.name} title={app.name} className="flex w-11 justify-center">
            <span className={`relative flex h-[38px] w-[38px] items-center justify-center rounded-[4px] ${app.active ? 'bg-[#f3f6d6]' : ''}`}>
              <svg width="28" height="28" viewBox="0 -1 28 28" overflow="visible">{app.icon}</svg>
              {app.running && <span className="absolute bottom-0 h-[3px] w-[6px] rounded-full bg-[#80845c]" />}
              {app.active && <span className="absolute bottom-0 h-[3px] w-4 rounded-full bg-[#0078d4]" />}
            </span>
          </button>
        ))}
      </div>
      <div className="flex items-center justify-end pt-px pr-5">
        <button aria-label="Mostrar iconos ocultos">
          <svg width="12" height="7"><path d="M.7 6.3L6 1L11.3 6.3" fill="none" stroke="#1c1c1c" strokeWidth="1.3" /></svg>
        </button>
        <button className="ml-[17px] text-center">
          ESP
          <br />
          LAA
        </button>
        <button aria-label="Red y volumen" className="ml-[18px] flex items-center gap-[7px]">
          <svg width="17" height="17" viewBox="0 0 17 17" fill="none" stroke="#1c1c1c" strokeWidth="1.2">
            <path d="M10 1.5H2Q1 1.5 1 2.5V11.5Q1 12.5 2 12.5H11M5 12.5V16M3 16H12M9 13V16" />
            <path d="M12 1H16V5Q16 7 14 7T12 5ZM14 7V16" />
          </svg>
          <svg width="17" height="14" viewBox="0 0 17 14" fill="none" stroke="#1c1c1c" strokeWidth="1.2">
            <path d="M1 4.5H3.5L7 1.5V12.5L3.5 9.5H1ZM9 4.5Q10.5 7 9 9.5" />
            <path d="M11 3Q14 7 11 11M13.5 1.5Q17.5 7 13.5 12.5" stroke="#9a9e7a" />
          </svg>
        </button>
        <button className="ml-[13px] text-right">
          9:13
          <br />
          25/04/2022
        </button>
        <span className="ml-2 h-4 w-4 rounded-full bg-[#0078d4] text-center text-[11px] text-white">3</span>
      </div>
    </div>
  )
}

export default function App() {
  return (
    <div className="flex min-h-screen flex-col bg-[#d6d6d6]">
      <div className="mr-px flex flex-1 flex-col overflow-hidden rounded-t-[8px] border-x border-t border-[#a5a5a5] bg-white">
        <TitleBar />
        <TabBar />
        <Ribbon />
        <main className="relative flex-1 overflow-hidden bg-white">
          <SketchCanvas />
          <Browser />
          <ViewCube />
          <div className="absolute right-0 bottom-[155px] flex h-[25px] w-[167px] items-center border border-r-0 border-[#c2c2c2] bg-[#f1f1f1] pt-px pl-[5px] font-['Roboto',sans-serif] text-[11px] text-[#666]">
            <button className="flex items-center gap-[10px]">
              <svg width="9" height="9"><circle cx="4.5" cy="4.5" r="4.5" fill="#333" /><path d="M2 4.5H7M4.5 2V7" stroke="#fff" strokeWidth="1.2" /></svg>
              PALETA DE BOCETO
            </button>
          </div>
          <NavigationBar />
        </main>
        <Timeline />
      </div>
      <Taskbar />
    </div>
  )
}
